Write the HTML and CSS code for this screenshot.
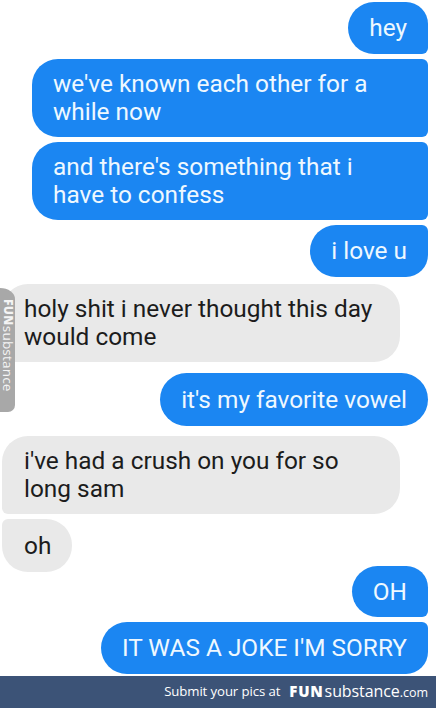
FILE: index.html
```html
<!DOCTYPE html>
<html>
<head>
<meta charset="utf-8">
<link rel="stylesheet" href="styles.css">
</head>
<body>
<div class="page">
  <div class="chat">
    <div class="msg out first g-top">hey</div>
    <div class="msg out mid wide g-in">we've known each other for a<br>while now</div>
    <div class="msg out mid wide g-in">and there's something that i<br>have to confess</div>
    <div class="msg out last g-in">i love u</div>
    <div class="msg in first wide g-switch">holy shit i never thought this day<br>would come</div>
    <div class="msg out single g-vowel">it's my favorite vowel</div>
    <div class="msg in first wide g-crush">i've had a crush on you for so<br>long sam</div>
    <div class="msg in last g-in">oh</div>
    <div class="msg out first g-oh">OH</div>
    <div class="msg out last g-in">IT WAS A JOKE I'M SORRY</div>
  </div>
  <div class="footer">
    <span class="submit">Submit your pics at</span>
    <span class="brand"><b>FUN</b><span class="sub">substance</span><span class="com">.com</span></span>
  </div>
  <div class="tab"><span class="tab-text"><b>FUN</b>substance</span></div>
</div>
</body>
</html>
```

FILE: styles.css
```css
* { box-sizing: border-box; }
html, body { margin: 0; padding: 0; background: #fff; }
.page {
  position: relative;
  width: 436px;
  height: 708px;
  overflow: hidden;
  display: flex;
  flex-direction: column;
}
.chat {
  flex: 1;
  display: flex;
  flex-direction: column;
  padding: 2px 8px 0 2px;
  font-family: Roboto, "Liberation Sans", sans-serif;
  font-size: 24.4px;
  line-height: 28px;
}
.msg {
  padding: 12px 21px;
  max-width: 398px;
  white-space: nowrap;
}
.msg.out {
  align-self: flex-end;
  background: #1b86f2;
  color: #eef8ff;
}
.msg.in {
  align-self: flex-start;
  background: #e9e9e9;
  color: #1c1c1c;
  padding-left: 22px;
}
.msg.out.wide { width: 396px; }
.msg.in.wide { width: 398px; }
.msg.wide { padding-top: 11px; padding-bottom: 11px; }

.msg.out.first { border-radius: 26px 22px 6px 26px; }
.msg.out.mid { border-radius: 26px 6px 6px 26px; }
.msg.out.last { border-radius: 26px 6px 22px 26px; }
.msg.out.single { border-radius: 27px; }
.msg.in.first { border-radius: 26px 26px 26px 6px; }
.msg.in.last { border-radius: 6px 26px 26px 26px; }

.g-in { margin-top: 5px; }
.g-switch { margin-top: 7px; }
.g-vowel { margin-top: 11px; padding-top: 12.5px; padding-bottom: 12.5px; }
.g-crush { margin-top: 10px; }
.msg.in.last { padding-top: 12.5px; padding-bottom: 12.5px; }
.g-oh { margin-top: -6px; padding-top: 11.5px; padding-bottom: 11.5px; }

.footer {
  height: 32px;
  background: #3c5377;
  color: #fff;
  display: flex;
  align-items: center;
  justify-content: flex-end;
  gap: 9px;
  padding: 0 8px 2px 0;
  font-family: "Open Sans", "DejaVu Sans", sans-serif;
}
.submit { font-size: 13.2px; letter-spacing: -0.1px; }
.brand { display: flex; align-items: baseline; }
.brand b { font-size: 15px; font-weight: 800; letter-spacing: 0.8px; }
.brand .sub { font-size: 16px; letter-spacing: -0.1px; margin-left: 1px; }
.brand .com { font-size: 12.5px; }

.tab {
  position: absolute;
  left: 0;
  top: 288px;
  width: 15px;
  height: 124px;
  background: #a8a8a8;
  border-radius: 0 15px 7px 0 / 0 11px 7px 0;
  display: flex;
  justify-content: center;
  padding-top: 11px;
}
.tab-text {
  writing-mode: vertical-rl;
  font-family: "Open Sans", "DejaVu Sans", sans-serif;
  font-size: 13.5px;
  line-height: 15px;
  letter-spacing: 0.2px;
  color: #f4f4f4;
  white-space: nowrap;
}
.tab b { font-weight: 800; font-size: 12px; letter-spacing: 0.4px; }
```
